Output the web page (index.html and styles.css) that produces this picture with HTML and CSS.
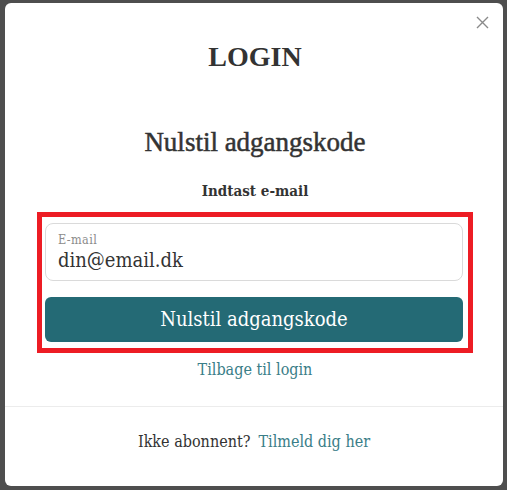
FILE: index.html
```html
<!DOCTYPE html>
<html lang="da">
<head>
<meta charset="utf-8">
<title>Login</title>
<link rel="stylesheet" href="styles.css">
</head>
<body>
<div class="backdrop">
  <div class="modal">
    <button class="close" aria-label="Luk">
      <svg width="13" height="13" viewBox="0 0 13 13"><path d="M1 1L12 12M12 1L1 12" stroke="#8a8a8a" stroke-width="1.4" fill="none"/></svg>
    </button>
    <div class="top">
      <h1 class="title">LOGIN</h1>
      <h2 class="subtitle">Nulstil adgangskode</h2>
      <p class="prompt">Indtast e-mail</p>
      <div class="highlight">
        <label class="field">
          <span class="field-label">E-mail</span>
          <span class="field-value">din@email.dk</span>
        </label>
        <button class="submit">Nulstil adgangskode</button>
      </div>
      <a class="back" href="#">Tilbage til login</a>
    </div>
    <div class="bottom">
      <span class="note">Ikke abonnent?</span><a class="signup" href="#">Tilmeld dig her</a>
    </div>
  </div>
</div>
</body>
</html>
```
FILE: styles.css
```css
html, body {
  margin: 0;
  padding: 0;
}
body {
  background: #4e4e4e;
  font-family: "DejaVu Serif Condensed", "DejaVu Serif", serif;
  color: #333;
}
.backdrop {
  width: 507px;
  height: 490px;
  padding: 3px 4px 0 5px;
  box-sizing: border-box;
}
.modal {
  position: relative;
  width: 498px;
  background: #fff;
  border-radius: 6px;
  display: flex;
  flex-direction: column;
}
.close {
  position: absolute;
  top: 13px;
  right: 14px;
  padding: 0;
  border: 0;
  background: none;
  width: 13px;
  height: 13px;
  display: block;
}
.close svg { display: block; }
.top {
  display: flex;
  flex-direction: column;
  align-items: center;
  padding: 38px 30px 24px 32px;
  border-bottom: 1px solid #ececec;
}
.title {
  margin: 0;
  font-family: "Liberation Serif", "Times New Roman", serif;
  font-size: 28px;
  line-height: 32px;
  font-weight: bold;
  color: #333;
}
.subtitle {
  margin: 54px 0 0;
  font-family: "Liberation Serif", "Times New Roman", serif;
  font-size: 27px;
  line-height: 30px;
  font-weight: normal;
  -webkit-text-stroke: 0.5px #333;
  color: #333;
}
.prompt {
  margin: 24px 0 0;
  font-size: 15px;
  line-height: 20px;
  font-weight: bold;
  color: #333;
}
.highlight {
  margin-top: 11px;
  width: 436px;
  box-sizing: border-box;
  border: 5px solid #ed1c24;
  padding: 6px 5px 6px 3px;
  display: flex;
  flex-direction: column;
  gap: 16px;
}
.field {
  display: flex;
  flex-direction: column;
  height: 58px;
  box-sizing: border-box;
  border: 1px solid #dadada;
  border-radius: 8px;
  padding: 9px 12px 0;
}
.field-label {
  font-size: 12.5px;
  line-height: 14px;
  letter-spacing: 0.4px;
  color: #8c8c8c;
}
.field-value {
  font-size: 20px;
  line-height: 26px;
  color: #333;
}
.submit {
  height: 45px;
  border: 0;
  border-radius: 6px;
  background: #246a75;
  color: #fff;
  font-family: "DejaVu Serif Condensed", "DejaVu Serif", serif;
  font-size: 20px;
  line-height: 45px;
  padding: 0;
}
.back {
  margin-top: 5px;
  font-size: 16px;
  line-height: 24px;
  color: #3a7e88;
  text-decoration: none;
}
.bottom {
  display: flex;
  justify-content: center;
  padding: 23px 0 32px;
  font-size: 16px;
  line-height: 24px;
}
.note { color: #333; }
.signup {
  margin-left: 8px;
  color: #3a7e88;
  text-decoration: none;
}
```
